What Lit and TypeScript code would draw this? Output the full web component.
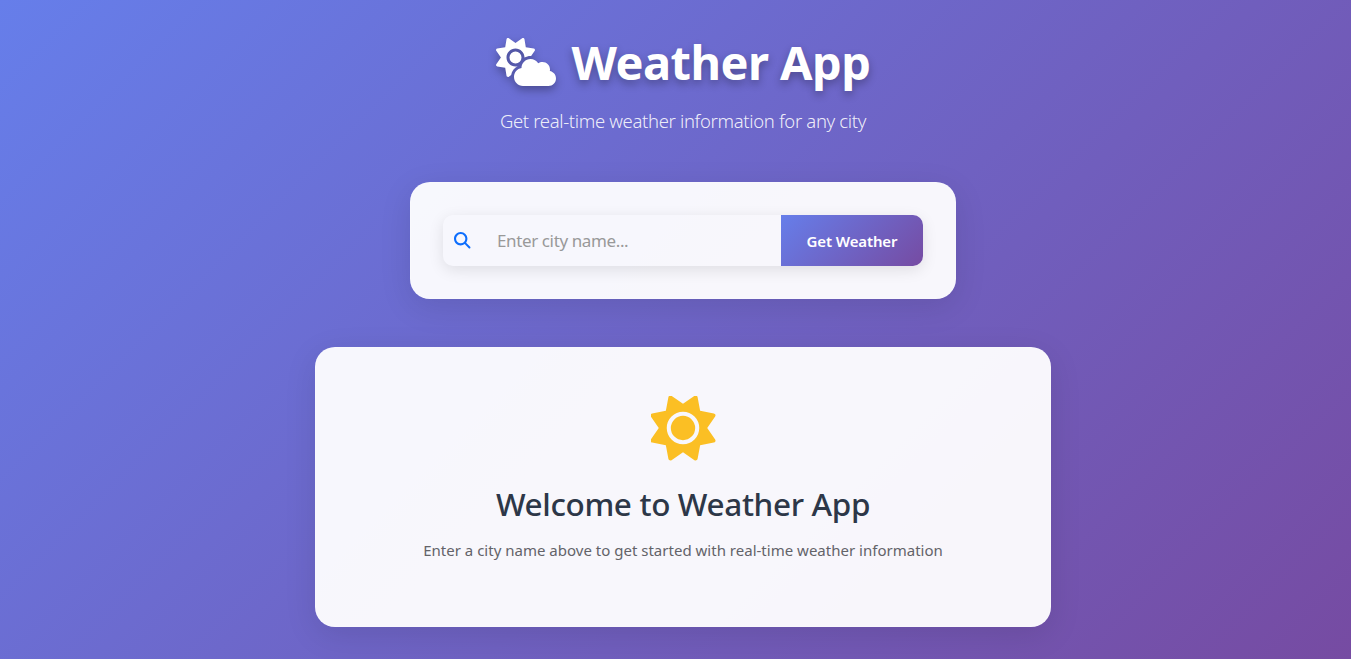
import { LitElement, html, css, svg } from "lit";
import { customElement } from "lit/decorators.js";

const cloudSun = svg`<path d="M294.2 1.2c5.1 2.1 8.7 6.7 9.6 12.1l14.1 84.7 84.7 14.1c5.4 .9 10 4.5 12.1 9.6s1.5 10.9-1.6 15.4l-38.5 55c-2.2-.1-4.4-.2-6.7-.2c-23.3 0-45.1 6.2-64 17.1l0-1.1c0-53-43-96-96-96s-96 43-96 96s43 96 96 96c8.1 0 15.9-1 23.4-2.9c-36.6 18.1-63.3 53.1-69.8 94.9l-24.4 17c-4.5 3.2-10.3 3.8-15.4 1.6s-8.7-6.7-9.6-12.1L98.1 317.9 13.4 303.8c-5.4-.9-10-4.5-12.1-9.6s-1.5-10.9 1.6-15.4L52.5 208 2.9 137.2c-3.2-4.5-3.8-10.3-1.6-15.4s6.7-8.7 12.1-9.6L98.1 98.1l14.1-84.7c.9-5.4 4.5-10 9.6-12.1s10.9-1.5 15.4 1.6L208 52.5 278.8 2.9c4.5-3.2 10.3-3.8 15.4-1.6zM144 208a64 64 0 1 1 128 0 64 64 0 1 1 -128 0zM639.9 431.9c0 44.2-35.8 80-80 80l-271.9 0c-53 0-96-43-96-96c0-47.6 34.6-87 80-94.6l0-1.3c0-53 43-96 96-96c34.9 0 65.4 18.6 82.2 46.4c13-9.1 28.8-14.4 45.8-14.4c44.2 0 80 35.8 80 80c0 5.9-.6 11.7-1.9 17.2c37.4 6.7 65.8 39.4 65.8 78.7z"/>`;
const sun = svg`<path d="M361.5 1.2c5 2.1 8.6 6.6 9.6 11.9L391 121l107.9 19.8c5.3 1 9.8 4.6 11.9 9.6s1.5 10.7-1.6 15.2L446.9 256l62.3 90.3c3.1 4.5 3.7 10.2 1.6 15.2s-6.6 8.6-11.9 9.6L391 391 371.1 498.9c-1 5.3-4.6 9.8-9.6 11.9s-10.7 1.5-15.2-1.6L256 446.9l-90.3 62.3c-4.5 3.1-10.2 3.7-15.2 1.6s-8.6-6.6-9.6-11.9L121 391 13.1 371.1c-5.3-1-9.8-4.6-11.9-9.6s-1.5-10.7 1.6-15.2L65.1 256 2.8 165.7c-3.1-4.5-3.7-10.2-1.6-15.2s6.6-8.6 11.9-9.6L121 121 140.9 13.1c1-5.3 4.6-9.8 9.6-11.9s10.7-1.5 15.2 1.6L256 65.1 346.3 2.8c4.5-3.1 10.2-3.7 15.2-1.6zM160 256a96 96 0 1 1 192 0 96 96 0 1 1 -192 0zm224 0a128 128 0 1 0 -256 0 128 128 0 1 0 256 0z"/>`;
const magnifier = svg`<path d="M416 208c0 45.9-14.9 88.3-40 122.7L502.6 457.4c12.5 12.5 12.5 32.8 0 45.3s-32.8 12.5-45.3 0L330.7 376c-34.4 25.2-76.8 40-122.7 40C93.1 416 0 322.9 0 208S93.1 0 208 0S416 93.1 416 208zM208 352a144 144 0 1 0 0-288 144 144 0 1 0 0 288z"/>`;

@customElement("app-root")
export class AppRoot extends LitElement {
  static styles = css`
    :host {
      display: flex;
      flex-direction: column;
      align-items: center;
      box-sizing: border-box;
      height: 659px;
      padding: 32px 0 0 15px;
      overflow: hidden;
      background: linear-gradient(135deg, #667eea 0%, #764ba2 100%);
      font-family: "Segoe UI", "Noto Sans", "Open Sans", sans-serif;
    }
    * { box-sizing: border-box; }
    svg { display: block; fill: currentColor; flex: none; }
    h1, h2, p { margin: 0; white-space: nowrap; }
    .title {
      display: flex;
      gap: 16px;
      width: 375px;
      height: 58px;
      color: #fff;
      font-size: 47px;
      font-weight: 700;
      line-height: 60px;
      letter-spacing: -0.55px;
      text-shadow: 0 4px 8px rgba(0, 0, 0, 0.3);
    }
    .title svg {
      width: 60px;
      height: 48px;
      margin-top: 6px;
      filter: drop-shadow(0 4px 4px rgba(0, 0, 0, 0.3));
    }
    .subtitle {
      margin-top: 16px;
      height: 30px;
      color: rgba(255, 255, 255, 0.9);
      font-size: 18.5px;
      font-weight: 300;
      line-height: 30px;
      letter-spacing: -0.34px;
    }
    .card {
      border: 1px solid rgba(255, 255, 255, 0.2);
      border-radius: 20px;
      background: rgba(255, 255, 255, 0.95);
      box-shadow: 0 8px 32px rgba(0, 0, 0, 0.1);
    }
    .search { width: 546px; height: 117px; margin-top: 46px; padding: 32px; }
    .group {
      display: flex;
      height: 51px;
      border-radius: 10px;
      overflow: hidden;
      box-shadow: 0 4px 15px rgba(0, 0, 0, 0.1);
    }
    .lens { width: 38px; padding-left: 1px; display: grid; place-items: center; color: #0d6efd; }
    .lens svg { width: 16.5px; height: 16.5px; }
    input {
      flex: 1;
      min-width: 0;
      border: 0;
      outline: 0;
      padding: 0 16px;
      background: transparent;
      font: 400 17px/27px "Segoe UI", "Noto Sans", "Open Sans", sans-serif;
      letter-spacing: -0.38px;
    }
    input::placeholder { color: #999; opacity: 1; }
    button {
      width: 142px;
      border: 0;
      padding: 1px 0 0;
      color: #fff;
      background: linear-gradient(135deg, #667eea 0%, #764ba2 100%);
      font: 600 15px/24px "Segoe UI", "Noto Sans", "Open Sans", sans-serif;
      letter-spacing: -0.12px;
    }
    .welcome {
      display: flex;
      flex-direction: column;
      align-items: center;
      width: 736px;
      height: 280px;
      margin-top: 48px;
      padding-top: 47px;
    }
    .welcome svg { width: 66px; height: 66px; padding: 0.5px; color: #fbbf24; }
    h2 {
      margin-top: 24px;
      color: #2d3748;
      font-size: 31.5px;
      font-weight: 500;
      line-height: 38px;
      letter-spacing: -0.36px;
    }
    .hint {
      margin-top: 15px;
      color: #636369;
      font-size: 15px;
      line-height: 24px;
      letter-spacing: 0.01px;
    }
  `;

  render() {
    return html`
      <h1 class="title"><svg viewBox="0 0 640 512">${cloudSun}</svg><span>Weather App</span></h1>
      <p class="subtitle">Get real-time weather information for any city</p>
      <section class="card search">
        <div class="group">
          <span class="lens"><svg viewBox="0 0 512 512">${magnifier}</svg></span>
          <input type="text" placeholder="Enter city name..." />
          <button type="button">Get Weather</button>
        </div>
      </section>
      <section class="card welcome">
        <svg viewBox="0 0 512 512">${sun}</svg>
        <h2>Welcome to Weather App</h2>
        <p class="hint">Enter a city name above to get started with real-time weather information</p>
      </section>
    `;
  }
}
